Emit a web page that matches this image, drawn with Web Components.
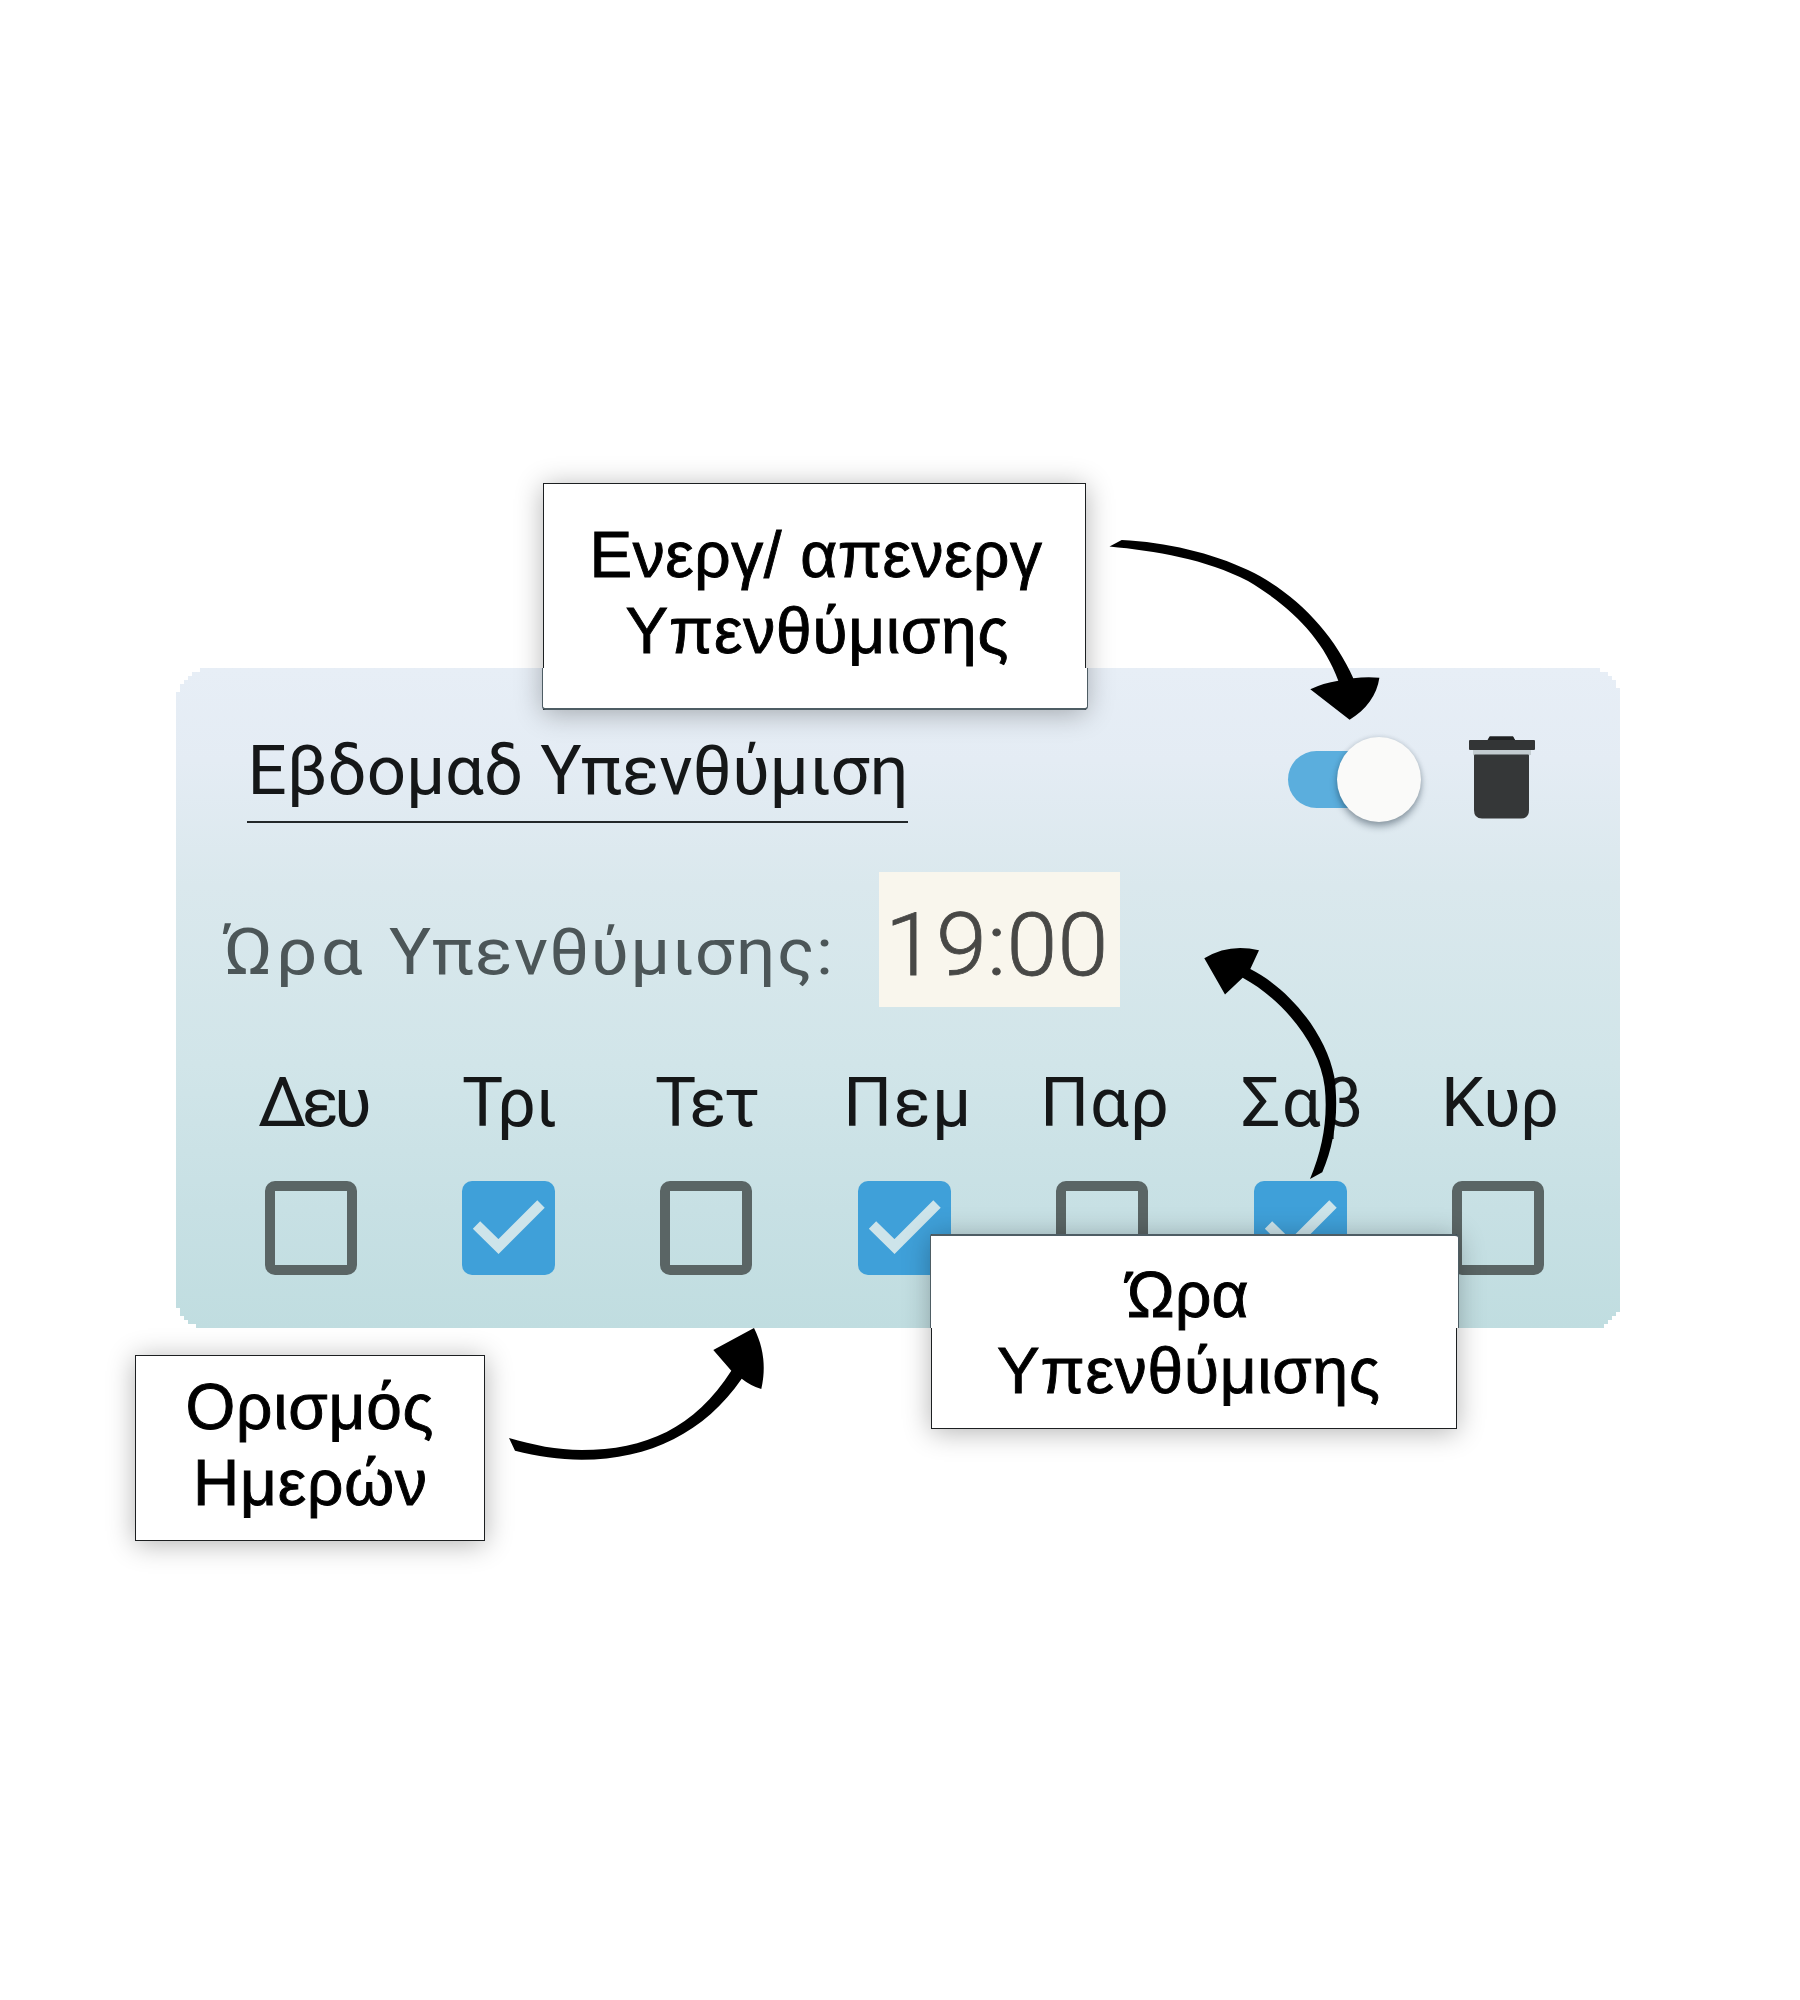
<!DOCTYPE html>
<html lang="el">
<head>
<meta charset="utf-8">
<title>Εβδομαδ Υπενθύμιση</title>
<style>
  html, body { margin: 0; background: #fff; }
  body { width: 1800px; height: 2000px; overflow: hidden; }
</style>
</head>
<body>
<reminder-guide></reminder-guide>
<script>
const define = (name, html, ready) => {
  const tpl = document.createElement('template');
  tpl.innerHTML = html;
  customElements.define(name, class extends HTMLElement {
    connectedCallback() {
      if (this.shadowRoot) return;
      this.attachShadow({ mode: 'open' }).appendChild(tpl.content.cloneNode(true));
      if (ready) ready(this, this.shadowRoot);
    }
  });
};

/* One line of text, tracked so that its ink starts at `lead` and spans `span` pixels;
   `stretch` widens the letters themselves. */
const pen = document.createElement('canvas').getContext('2d');
define('tracked-line', `<style>
    :host { display: block; white-space: nowrap; }
    span { display: block; width: max-content; transform-origin: 0 0; }
  </style><span><slot></slot></span>`, (el, root) => {
  const cs = getComputedStyle(el);
  pen.font = `${cs.fontWeight} ${cs.fontSize} ${cs.fontFamily}`;
  const text = el.textContent;
  const k = +(el.getAttribute('stretch') || 1);
  const m = pen.measureText(text);
  const ink = m.actualBoundingBoxLeft + m.actualBoundingBoxRight;
  const s = root.querySelector('span');
  s.style.letterSpacing = ((+el.getAttribute('span') / k - ink) / (text.length - 1)) + 'px';
  s.style.marginLeft = (+el.getAttribute('lead') + m.actualBoundingBoxLeft * k) + 'px';
  if (k !== 1) s.style.transform = `scaleX(${k})`;
});

define('toggle-switch', `
  <style>
    :host { display: flex; align-items: center; width: 134px; height: 85px; }
    .track { width: 96px; height: 57px; border-radius: 29px; background: #5baedd; }
    .thumb { width: 84px; height: 85px; border-radius: 50%; background: #fafaf9; margin-left: -47px;
             box-shadow: 0 5px 7px rgba(20,40,55,.36), 0 0 5px rgba(20,40,55,.15); }
  </style>
  <div class="track"></div><div class="thumb"></div>`);

define('trash-icon', `
  <style>:host { display: block; width: 66px; height: 83px; } svg { display: block; }</style>
  <svg width="66" height="83" viewBox="0 0 66 83">
    <rect x="4" y="13" width="58" height="6" fill="#c3ccd0"/>
    <path d="M1 4H18.500L20.500.5H44L46 4H65Q66 4 66 5V13Q66 14 65 14H1Q0 14 0 13V5Q0 4 1 4Z" fill="#333536"/>
    <path d="M19 4L21 .5H44L46 4Z" fill="#1f2122"/>
    <path d="M6 18.500H59Q60 18.500 60 19.500V74Q60 82.500 52 82.500H13Q5 82.500 5 74V19.500Q5 18.500 6 18.500Z" fill="#353738"/>
  </svg>`);

define('check-box', `
  <style>
    :host { display: block; width: 92px; height: 94px; box-sizing: border-box;
            border: 10px solid #5a6565; border-radius: 10px; }
    :host([checked]) { width: 93px; border: 0; background: #3fa0d9; }
    svg { display: none; }
    :host([checked]) svg { display: block; }
  </style>
  <svg width="93" height="94" viewBox="0 0 93 94"><path d="M14.500 44L36.500 65.500L79 23" fill="none" stroke="#cde4ea" stroke-width="10.500"/></svg>`);

define('day-column', `
  <style>
    :host { display: flex; flex-direction: column; gap: 41.600px; width: 198px; }
    .label { font: 400 69px/72px Roboto, sans-serif; color: #151718; }
    .box { display: flex; justify-content: center; }
  </style>
  <div class="label"></div><div class="box"><check-box></check-box></div>`, (el, root) => {
  const line = document.createElement('tracked-line');
  line.textContent = el.getAttribute('name');
  line.setAttribute('lead', el.getAttribute('lead'));
  line.setAttribute('span', el.getAttribute('span'));
  root.querySelector('.label').append(line);
  root.querySelector('check-box').toggleAttribute('checked', el.hasAttribute('checked'));
});

define('reminder-card', `
  <style>
    :host { display: flex; flex-direction: column; width: 1444px; height: 660px; box-sizing: border-box;
      padding: 67px 22px 0 36px;
      background: linear-gradient(#e7eef6 0, #e4ecf4 14%, #dae8ed 33%, #d1e5e9 60%, #c7e0e4 82%, #c0dde0 100%);
      clip-path: polygon(24px 0, 1424px 0, 1424px 4px, 1432px 4px, 1432px 8px, 1436px 8px, 1436px 12px, 1440px 12px, 1440px 20px, 1444px 20px,
        1444px 644px, 1440px 644px, 1440px 648px, 1436px 648px, 1436px 652px, 1432px 652px, 1432px 656px, 1428px 656px, 1428px 660px,
        20px 660px, 20px 656px, 12px 656px, 12px 652px, 8px 652px, 8px 648px, 4px 648px, 4px 640px, 0 640px,
        0 24px, 4px 24px, 4px 16px, 8px 16px, 8px 12px, 12px 12px, 12px 8px, 16px 8px, 16px 4px, 24px 4px); }
    header { display: flex; align-items: flex-start; height: 137px; }
    .title { width: 661px; height: 88px; box-sizing: border-box; margin-left: 35px;
      font: 400 69px/72px Roboto, sans-serif; color: #151718; border-bottom: 2.500px solid #23282a; }
    toggle-switch { margin: 2px 0 0 380px; }
    trash-icon { margin: 1px 0 0 47px; }
    .time { display: flex; align-items: flex-start; height: 195.400px; }
    .label { display: flex; width: 667px; margin-top: 44px; font: 400 65px/72px Roboto, sans-serif; color: #4c5658; }
    .label > :first-child { width: 166px; }
    .clock { width: 241px; height: 135px; box-sizing: border-box; padding-top: 23px; background: #f9f6ed;
      font: 300 88px/100px Roboto, sans-serif; color: #484846; -webkit-text-stroke: .8px #484846; }
    .days { display: flex; }
    .days > :first-child { margin-right: -1px; }
  </style>
  <header>
    <div class="title"><tracked-line lead="5.500" span="651">Εβδομαδ Υπενθύμιση</tracked-line></div>
    <toggle-switch></toggle-switch>
    <trash-icon></trash-icon>
  </header>
  <div class="time">
    <div class="label"><tracked-line lead="10" span="141" stretch="1.14">Ώρα</tracked-line> <tracked-line lead="11" span="440" stretch="1.08">Υπενθύμισης:</tracked-line></div>
    <div class="clock"><tracked-line lead="13" span="211" stretch="1.04">19:00</tracked-line></div>
  </div>
  <div class="days">
    <day-column name="Δευ" lead="47" span="110"></day-column>
    <day-column name="Τρι" lead="54" span="92" checked></day-column>
    <day-column name="Τετ" lead="49" span="102"></day-column>
    <day-column name="Πεμ" lead="44" span="117" checked></day-column>
    <day-column name="Παρ" lead="43" span="120"></day-column>
    <day-column name="Σαβ" lead="42" span="117" checked></day-column>
    <day-column name="Κυρ" lead="47" span="110"></day-column>
  </div>`);

define('callout-box', `
  <style>
    :host { display: block; position: absolute; box-sizing: border-box; background: #fff; color: #000;
      border: 1px solid #1c1f21; font: 400 64px/76.800px "Liberation Sans", Arial, sans-serif;
      box-shadow: 0 3px 26px rgba(0,0,0,.3); }
    /* the stretch that lies over the card has a softer, slightly wider outline */
    .over { position: absolute; left: -2.500px; right: -2.500px; top: var(--over-top); bottom: var(--over-bottom);
      display: var(--over, none); background: #fff; border: 1.500px solid #4e5d64; border-radius: var(--over-radius);
      border-top-width: var(--over-t, 0); border-bottom-width: var(--over-b, 0); }
    .lines { position: relative; -webkit-text-stroke: .9px #000; }
  </style>
  <div class="over"></div><div class="lines"><slot></slot></div>`);

define('reminder-guide', `
  <style>
    :host { display: block; position: relative; width: 1800px; height: 2000px; box-sizing: border-box;
      padding: 668px 180px 0 176px; background: #fff; }
    .enable { left: 543px; top: 483px; width: 543px; height: 227px; padding-top: 32.500px;
      --over: block; --over-top: 184px; --over-bottom: -1px; --over-b: 2px; --over-radius: 0 0 4px 4px; }
    .hour { left: 931px; top: 1234px; width: 526px; height: 195px; padding-top: 21.500px;
      --over: block; --over-top: -1px; --over-bottom: 100px; --over-t: 2px; --over-radius: 2px 4px 0 0; }
    .set { left: 135px; top: 1355px; width: 350px; height: 186px; padding-top: 12.500px; }
    svg { position: absolute; left: 0; top: 0; }
  </style>
  <reminder-card></reminder-card>
  <callout-box class="enable">
    <tracked-line lead="50.500" span="447.500">Ενεργ/ απενεργ</tracked-line>
    <tracked-line lead="82.500" span="380">Υπενθύμισης</tracked-line>
  </callout-box>
  <callout-box class="hour">
    <tracked-line lead="191.500" span="124">Ώρα</tracked-line>
    <tracked-line lead="66" span="380">Υπενθύμισης</tracked-line>
  </callout-box>
  <callout-box class="set">
    <tracked-line lead="52.500" span="243">Ορισμός</tracked-line>
    <tracked-line lead="62" span="227">Ημερών</tracked-line>
  </callout-box>
  <svg width="1800" height="2000" viewBox="0 0 1800 2000" fill="#000">
    <path d="M1109.500 546.500L1121.700 540C1166 542 1212 553 1248 570C1296 593 1334 634 1353.300 678.300Q1366 676.500 1379.400 677.700C1377 695 1366 710 1349.600 719.700L1310.300 689.300Q1323 683 1338.300 680.700C1323 638 1290 606 1248 581C1206 559 1155 551 1109.500 546.500Z"/>
    <path d="M1204.300 958.300Q1229 943 1259 950.300L1250.300 969C1290 989 1326 1034 1334.300 1076.700C1339 1110 1335 1142 1322.300 1172.300L1310 1179C1323 1148 1328 1117 1324.700 1086.700C1320 1046 1284 1000 1242.700 977.700L1225 994.600Z"/>
    <path d="M509 1438C533 1445 557 1450 581.700 1450C645 1450 695 1428 731.300 1370.700L713.300 1350L754 1328C764 1348 766 1368 761.300 1389Q751 1386 741.700 1378.700C705 1432 650 1459.700 581.700 1459.700C559 1459.700 537 1456 515 1450.700Z"/>
  </svg>`);
</script>
</body>
</html>
